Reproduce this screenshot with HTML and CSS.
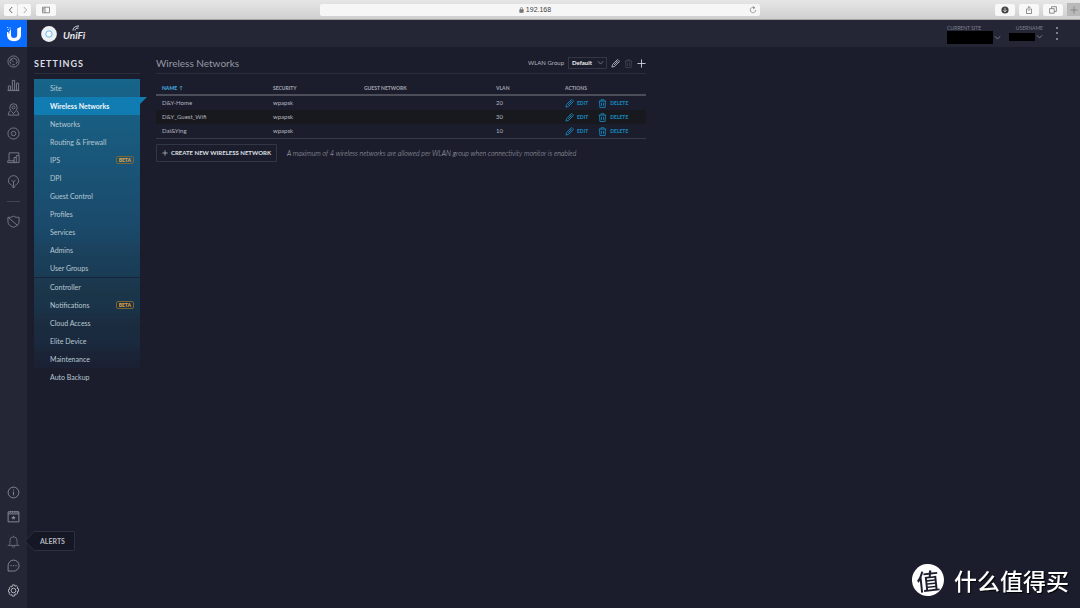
FILE: index.html
```html
<!DOCTYPE html>
<html lang="en">
<head>
<meta charset="utf-8">
<title>UniFi - Wireless Networks</title>
<link rel="stylesheet" href="styles.css">
</head>
<body>
<svg class="defs" aria-hidden="true">
  <symbol id="pencil" viewBox="0 0 12 12"><path d="M1.200 10.800l.9-3.500L8.300 1.100a.9.900 0 0 1 1.300 0l1.300 1.300a.9.900 0 0 1 0 1.300L4.700 9.900zM7.200 2.400l2.400 2.400M4 8l4.300-4.300"/></symbol>
  <symbol id="trash" viewBox="0 0 12 12"><path d="M1 2.800h10M4 2.800V1h4v1.800M2 2.800l.5 8.500h7l.5-8.500M4.600 5v4.200M7.400 5v4.200"/></symbol>
  <symbol id="chevron" viewBox="0 0 8 8"><path d="M1 2.500L4 5.800l3-3.300"/></symbol>
  <symbol id="plus" viewBox="0 0 10 10"><path d="M5 .5v9M.5 5h9"/></symbol>
</svg>
<div class="page">
  <div class="browser">
    <div class="browser-left">
      <div class="history">
        <button class="tool" aria-label="Back"><svg viewBox="0 0 8 8"><path d="M5.200 1L2.400 4l2.800 3"/></svg></button>
        <button class="tool tool-off" aria-label="Forward"><svg viewBox="0 0 8 8"><path d="M2.800 1l2.800 3-2.800 3"/></svg></button>
      </div>
      <button class="tool tool-wide" aria-label="Sidebar"><svg class="icon-8" viewBox="0 0 8 8"><path d="M.5 1.200h7v5.600h-7zM3 1.200v5.600M1.200 2.500h1M1.200 3.700h1M1.200 4.900h1"/></svg></button>
    </div>
    <div class="address">
      <span class="host"><svg class="lock" viewBox="0 0 6 8"><path class="solid" d="M.7 3.500h4.600v3.700H.7z"/><path d="M1.600 3.500V2a1.400 1.400 0 0 1 2.800 0v1.500"/></svg>192.168</span>
      <button class="reload" aria-label="Reload"><svg class="icon-8" viewBox="0 0 8 8"><path d="M6 2.200A2.700 2.700 0 1 0 6.700 4M4 .4l1.700 1.200L4 2.800"/></svg></button>
    </div>
    <div class="browser-right">
      <button class="tool tool-wide" aria-label="Downloads"><svg class="icon-8" viewBox="0 0 8 8"><circle class="dark" cx="4" cy="4" r="3.600"/><path class="light" d="M4 1.800v4M2.400 4.200L4 5.800l1.600-1.600"/></svg></button>
      <button class="tool tool-wide" aria-label="Share"><svg class="icon-8" viewBox="0 0 8 8"><path d="M2.800 3H1.500v4.500h5V3H5.200M4 5V.6M2.700 1.800L4 .5l1.300 1.300"/></svg></button>
      <button class="tool tool-wide" aria-label="Tabs"><svg class="icon-8" viewBox="0 0 8 8"><path d="M.6 2.600h4.600v4.600H.6zM2.600 2.600V.7h4.800v4.700H5.200"/></svg></button>
      <button class="new-tab" aria-label="New tab"><svg class="icon-8" viewBox="0 0 10 10"><use href="#plus"/></svg></button>
    </div>
  </div>

  <div class="app">
    <nav class="rail" aria-label="Main">
      <a class="brand" href="#" aria-label="Ubiquiti"><svg viewBox="0 0 16 16"><path d="M5 3.500V9c0 1.900 1.100 3 3 3 2.200 0 3.200-1.200 3.200-3V2.500L15 .8V9c0 3.800-2.800 6.200-7 6.200S1 12.800 1 9V6h1.400v1.500h1V5h.8V3.500z"/><path d="M1.200 1h1v1h-1zM3.600 1.500h1v1h-1zM1.800 3.300h1v1h-1z"/></svg></a>
      <div class="rail-group">
        <a href="#" aria-label="Dashboard"><svg viewBox="0 0 14 14"><circle cx="7" cy="7" r="6"/><path d="M4 9.500A3.800 3.800 0 1 1 10 9.500M4 4.500l3 3M5.500 10.500h3"/></svg></a>
        <a href="#" aria-label="Statistics"><svg viewBox="0 0 14 14"><path d="M1.500 7.500h2.300V12H1.500zM5.800 1.500h2.400V12H5.800zM10.200 4.500h2.300V12h-2.300zM.5 12.500h13"/></svg></a>
        <a href="#" aria-label="Map"><svg viewBox="0 0 14 14"><path d="M7 11.500C4.500 8.500 3 7 3 4.800a4 4 0 0 1 8 0C11 7 9.500 8.500 7 11.500z"/><circle cx="7" cy="4.800" r="1.600"/><path d="M3.500 9H2.500l-1.300 4h11.600l-1.300-4h-1"/></svg></a>
        <a href="#" aria-label="Devices"><svg viewBox="0 0 14 14"><circle cx="7" cy="7" r="6"/><circle cx="7" cy="7" r="2.400"/></svg></a>
        <a href="#" aria-label="Clients"><svg viewBox="0 0 14 14"><path d="M2.200 10V2h10.600v3M.8 12.500h6.700V10.500H.8zM7.500 12.500V7H10v5.500zM10 7V5h3v7.500h-3"/></svg></a>
        <a href="#" aria-label="Insights"><svg viewBox="0 0 14 14"><path d="M5 10.800C3 10 1.500 8.300 1.500 6.200a5.500 5.500 0 0 1 11 0c0 2.100-1.500 3.800-3.500 4.600M5 12h4M5.800 13.500h2.400M7 12V7.500M4.800 5.300L7 7.500l2.200-2.200"/></svg></a>
      </div>
      <hr class="rail-line">
      <div class="rail-group">
        <a href="#" aria-label="Security"><svg viewBox="0 0 14 14"><path d="M1 2.500c2.200.2 4.200-.2 6-1.200 1.800 1 3.800 1.400 6 1.200V7c0 3-2.300 5.200-6 6.200C3.300 12.200 1 10 1 7zM1.400 2.700l9.800 8.500"/></svg></a>
      </div>
      <div class="rail-bottom">
        <a href="#" aria-label="Info"><svg viewBox="0 0 14 14"><circle cx="7" cy="7" r="5.800"/><path d="M7 6v4M7 3.800v1"/></svg></a>
        <a href="#" aria-label="Events"><svg viewBox="0 0 14 14"><path d="M1.200 2h11.600v10.800H1.200zM1.200 4.200h11.600M3.500 1v2M6 1v2M8.500 1v2M11 1v2"/><path class="fill" d="M7 6l.7 1.600 1.600.1-1.200 1.100.4 1.600L7 9.500l-1.500.9.400-1.600-1.200-1.100 1.600-.1z"/></svg></a>
        <a class="alerts" href="#" aria-label="Alerts"><svg viewBox="0 0 14 14"><path d="M.8 11.200h12.400M2.600 11.200C3.300 10 3.200 8.500 3.200 5.800a3.800 3.800 0 0 1 7.600 0c0 2.700-.1 4.200.6 5.400M5.500 12c.2 1.600 2.800 1.600 3 0M7 2V.8"/></svg>
          <span class="tip"><svg class="tip-arrow" viewBox="0 0 10 20"><path d="M10 .5L1 10l9 9.500"/></svg><span class="tip-text">ALERTS</span></span></a>
        <a href="#" aria-label="Chat"><svg viewBox="0 0 14 14"><path d="M1.200 13V7A5.900 5.900 0 1 1 7 13z"/><path d="M3.600 7.200H5M6.300 7.200h1.400M9 7.200h1.400"/></svg></a>
        <a class="current" href="#" aria-label="Settings"><svg viewBox="0 0 14 14"><path d="M5.800 1h2.400l.4 1.500 1.300-.8 1.700 1.600-.7 1.400 1.500.4v2.800l-1.500.4.700 1.400-1.700 1.700-1.300-.8L8.200 13H5.800l-.4-1.600-1.300.8-1.700-1.700.7-1.400-1.500-.4V5.900l1.500-.4-.7-1.400 1.700-1.600 1.300.8z"/><circle cx="7" cy="7" r="2.500"/></svg></a>
      </div>
    </nav>

    <div class="body">
      <header class="top">
        <a class="product" href="#">
          <svg class="disc" viewBox="0 0 16 16"><circle class="disc-face" cx="8" cy="8" r="7.900"/><circle class="disc-ring" cx="8" cy="8" r="3.200"/></svg>
          <span class="word">UniFi<svg class="waves" viewBox="0 0 8 6"><path d="M1 5.500C1 3 3 1 7 1M3 5.500C3 4 4 3 6.500 3"/></svg></span>
        </a>
        <div class="account">
          <button class="pick"><span class="pick-label">CURRENT SITE</span><span class="pick-row"><span class="mask"></span><svg viewBox="0 0 8 8"><use href="#chevron"/></svg></span></button>
          <button class="pick pick-user"><span class="pick-label">USERNAME</span><span class="pick-row"><span class="mask mask-small"></span><svg viewBox="0 0 8 8"><use href="#chevron"/></svg></span></button>
          <button class="more" aria-label="More"><i></i><i></i><i></i></button>
        </div>
      </header>

      <div class="columns">
        <aside class="settings">
          <h1>SETTINGS</h1>
          <ul class="menu">
            <li><a href="#">Site</a></li>
            <li><a class="active" href="#">Wireless Networks</a></li>
            <li><a href="#">Networks</a></li>
            <li><a href="#">Routing &amp; Firewall</a></li>
            <li><a href="#">IPS<span class="beta">BETA</span></a></li>
            <li><a href="#">DPI</a></li>
            <li><a href="#">Guest Control</a></li>
            <li><a href="#">Profiles</a></li>
            <li><a href="#">Services</a></li>
            <li><a href="#">Admins</a></li>
            <li><a href="#">User Groups</a></li>
            <li class="split"><a href="#">Controller</a></li>
            <li><a href="#">Notifications<span class="beta">BETA</span></a></li>
            <li><a href="#">Cloud Access</a></li>
            <li><a href="#">Elite Device</a></li>
            <li><a href="#">Maintenance</a></li>
          </ul>
          <ul class="menu menu-plain"><li><a href="#">Auto Backup</a></li></ul>
        </aside>

        <main class="content">
          <div class="heading">
            <h2>Wireless Networks</h2>
            <div class="group">
              <label for="wlan">WLAN Group</label>
              <span class="select"><select id="wlan"><option>Default</option></select><svg viewBox="0 0 8 8"><use href="#chevron"/></svg></span>
              <button class="icon-button" aria-label="Edit group"><svg viewBox="0 0 12 12"><use href="#pencil"/></svg></button>
              <button class="icon-button dim" aria-label="Delete group"><svg viewBox="0 0 12 12"><use href="#trash"/></svg></button>
              <button class="icon-button" aria-label="Add group"><svg viewBox="0 0 10 10"><use href="#plus"/></svg></button>
            </div>
          </div>
          <table>
            <colgroup><col class="c-name"><col class="c-security"><col class="c-guest"><col class="c-vlan"><col class="c-actions"></colgroup>
            <thead><tr><th class="sorted">NAME&nbsp; <svg class="sort" viewBox="0 0 6 8"><path d="M3 7.500V1M1 3l2-2 2 2"/></svg></th><th>SECURITY</th><th>GUEST NETWORK</th><th>VLAN</th><th>ACTIONS</th></tr></thead>
            <tbody>
              <tr><td>D&amp;Y-Home</td><td>wpapsk</td><td></td><td>20</td><td><div class="actions"><button><svg viewBox="0 0 12 12"><use href="#pencil"/></svg>EDIT</button><button><svg viewBox="0 0 12 12"><use href="#trash"/></svg>DELETE</button></div></td></tr>
              <tr><td>D&amp;Y_Guest_Wifi</td><td>wpapsk</td><td></td><td>30</td><td><div class="actions"><button><svg viewBox="0 0 12 12"><use href="#pencil"/></svg>EDIT</button><button><svg viewBox="0 0 12 12"><use href="#trash"/></svg>DELETE</button></div></td></tr>
              <tr><td>Dai&amp;Ying</td><td>wpapsk</td><td></td><td>10</td><td><div class="actions"><button><svg viewBox="0 0 12 12"><use href="#pencil"/></svg>EDIT</button><button><svg viewBox="0 0 12 12"><use href="#trash"/></svg>DELETE</button></div></td></tr>
            </tbody>
          </table>
          <div class="footer">
            <button class="create"><svg viewBox="0 0 10 10"><use href="#plus"/></svg>CREATE NEW WIRELESS NETWORK</button>
            <em>A maximum of 4 wireless networks are allowed per WLAN group when connectivity monitor is enabled</em>
          </div>
        </main>
      </div>
    </div>
  </div>
  <div class="watermark"><span class="seal">值</span><span>什么值得买</span></div>
</div>
</body>
</html>
```
FILE: styles.css
```css
* { box-sizing: border-box; }
body { margin: 0; background: #1b1d2d; color: #b4b6be; font: 7px/10px Lato, "Noto Sans CJK SC", sans-serif; }
button, select { font: inherit; color: inherit; background: none; border: 0; margin: 0; padding: 0; }
a { color: inherit; text-decoration: none; }
ul { list-style: none; margin: 0; padding: 0; }
svg { display: block; fill: none; stroke: currentColor; stroke-width: 1; }
.defs { position: absolute; width: 0; height: 0; }
.page { display: flex; flex-direction: column; min-height: 100vh; }

/* Browser toolbar */
.browser { display: grid; grid-template-columns: 1fr 440px 1fr; align-items: center; height: 20px; background: linear-gradient(#e6e6e6, #cfcfcf); border-bottom: 1px solid #a5a5a5; color: #666; }
.browser-left { display: flex; gap: 5px; padding-left: 4px; }
.history { display: flex; gap: 1px; }
.browser-right { display: flex; justify-content: flex-end; align-items: center; gap: 4px; }
.tool { display: flex; align-items: center; justify-content: center; width: 13px; height: 12px; border-radius: 2px; background: #f8f8f8; }
.tool svg { width: 8px; height: 8px; }
.tool-wide { width: 20px; }
.tool-off { color: #aaa; }
.icon-8 { width: 8px; height: 8px; stroke-width: .7; }
.dark { fill: #444; stroke: none; }
.light { stroke: #fff; }
.new-tab { display: flex; align-items: center; justify-content: center; align-self: flex-end; width: 13px; height: 13px; background: #b9b9b9; }
.address { display: grid; grid-template-columns: 1fr auto 1fr; align-items: center; height: 12px; border-radius: 2px; background: #f6f6f6; font-family: "Liberation Sans", sans-serif; color: #444; }
.host { grid-column: 2; display: flex; align-items: center; gap: 2px; padding-right: 10px; }
.lock { width: 5px; height: 6px; color: #777; }
.solid { fill: currentColor; }
.reload { justify-self: end; padding-right: 3px; color: #777; }

/* Icon rail */
.app { display: flex; flex: 1; }
.rail { display: flex; flex-direction: column; flex: none; width: 27px; background: #242636; color: #7a7c87; }
.brand { display: flex; align-items: center; justify-content: center; height: 27px; margin-bottom: 2px; background: #0a6cff; color: #fff; }
.brand svg { width: 16px; height: 16px; fill: currentColor; stroke: none; }
.rail-group { display: flex; flex-direction: column; }
.rail-group a, .rail-bottom a { display: flex; align-items: center; justify-content: center; height: 24px; }
.rail-group a > svg, .rail-bottom a > svg { width: 13px; height: 13px; }
.rail-line { width: 13px; margin: 8px auto 7px; border: 0; border-top: 1px solid #434553; }
.rail-bottom { display: flex; flex-direction: column; justify-content: space-between; height: 122px; margin-top: auto; margin-bottom: 6px; color: #8b8d97; }
.fill { fill: currentColor; stroke: none; }
.alerts { position: relative; color: #6c6e7a; }
.current { color: #b8bac2; }
.tip { position: absolute; left: 24px; top: 2px; display: flex; height: 20px; color: #b4b6be; }
.rail-bottom .tip-arrow { width: 10px; height: 20px; fill: #151724; stroke: #2d303f; }
.tip-text { display: flex; align-items: center; padding: 0 9px 0 6px; background: #151724; border: 1px solid #2d303f; border-left: 0; border-radius: 0 2px 2px 0; font-weight: 700; }

/* Header */
.body { flex: 1; min-width: 0; }
.top { display: flex; align-items: center; justify-content: space-between; height: 27px; padding: 0 22px 0 14px; background: #242636; }
.product { display: flex; align-items: center; gap: 6px; color: #e4e5e9; }
.disc { width: 16px; height: 16px; stroke: none; }
.disc-face { fill: #eef1f4; }
.disc-ring { fill: #f8fafc; stroke: #68b9ec; }
.word { position: relative; padding-top: 2px; font-size: 10px; line-height: 12px; font-style: italic; font-weight: 700; }
.waves { position: absolute; left: 9px; top: -2px; width: 8px; height: 6px; }
.account { display: flex; align-items: flex-start; height: 16px; color: #7f818c; }
.pick { display: flex; flex-direction: column; align-items: flex-start; margin-right: 8px; text-align: left; }
.pick-user { align-items: flex-end; margin-right: 13px; }
.pick-label { font-size: 5px; line-height: 5px; }
.pick-row { display: flex; align-items: center; gap: 1px; }
.pick-row svg { width: 7px; height: 7px; }
.mask { width: 46px; height: 13px; background: #000; }
.mask-small { width: 26px; height: 8px; margin: 2px 0; }
.more { display: flex; flex-direction: column; justify-content: space-between; height: 13px; margin-top: 1px; }
.more i { width: 2px; height: 2px; border-radius: 50%; background: #9b9da6; }

/* Settings menu */
.columns { display: flex; align-items: flex-start; gap: 16px; padding: 10px 7px; }
.settings { flex: none; width: 106px; }
h1 { margin: 0 0 5px; padding-bottom: 3px; border-bottom: 1px solid #2a2d3b; color: #dcdde1; font-size: 9px; line-height: 13px; font-weight: 700; letter-spacing: 1px; }
.menu { background: linear-gradient(#17658a, #1b4a6b 50%, #1b3448 75%, #1b2033); color: #b9c8d2; }
.menu li:nth-child(odd) { background: rgba(20, 110, 150, .04); }
.menu a { position: relative; display: flex; align-items: center; justify-content: space-between; height: 18px; padding: 0 6px 0 16px; }
.menu .active { background: #117cb2; color: #f0f7fb; font-weight: 700; }
.active::after { content: ""; position: absolute; left: 100%; top: 0; border-top: 7px solid #117cb2; border-right: 7px solid transparent; }
.menu .split { border-top: 1px solid #182439; }
.menu-plain, .menu-plain li:nth-child(odd) { background: none; }
.beta { padding: 0 2px; border: 1px solid #7a6434; border-radius: 2px; color: #e3a33b; font-size: 5px; line-height: 6px; font-weight: 900; }

/* Networks table */
.content { flex: 1; max-width: 490px; }
.heading { display: flex; align-items: flex-start; justify-content: space-between; height: 17px; border-bottom: 1px solid #2a2d3b; }
h2 { margin: 0; color: #9698a2; font-size: 10px; line-height: 13px; font-weight: 400; }
.group { display: flex; align-items: center; gap: 4px; }
.group label { font-size: 6px; color: #b4b6be; }
.select { position: relative; display: flex; }
.select select { appearance: none; width: 39px; height: 12px; padding: 0 3px; border: 1px solid #333644; background: #1b1d2d; color: #f0f1f3; font-size: 6px; font-weight: 700; }
.select svg { position: absolute; right: 3px; top: 2px; width: 7px; height: 7px; color: #777985; pointer-events: none; }
.icon-button { color: #d0d2d8; }
.icon-button svg { width: 9px; height: 9px; }
.dim { color: #454855; }
table { width: 100%; margin-top: 8px; border-collapse: separate; border-spacing: 0; border-bottom: 1px solid #373a47; table-layout: fixed; font-size: 6px; }
.c-name { width: 111px; }
.c-security { width: 91px; }
.c-guest { width: 132px; }
.c-vlan { width: 69px; }
th, td { height: 14px; padding: 0 0 0 6px; text-align: left; line-height: 10px; }
th { border-bottom: 2px solid #4b4e59; color: #9a9ca6; font-size: 5px; font-weight: 900; }
.sorted { color: #45a9df; }
.sort { display: inline-block; width: 4px; height: 6px; vertical-align: -1px; }
tbody tr:nth-child(even) { background: #18191e; }
.actions { display: flex; gap: 10px; }
.actions button { display: flex; align-items: center; gap: 3px; color: #1785b8; font-size: 5px; font-weight: 900; }
.actions svg { width: 9px; height: 9px; stroke-width: 1.2; }
.footer { display: flex; align-items: center; gap: 10px; margin-top: 5px; }
.create { display: flex; align-items: center; gap: 3px; height: 18px; padding: 0 5px; border: 1px solid #333644; border-radius: 1px; color: #dfe0e4; font-size: 6px; font-weight: 700; }
.create svg { width: 6px; height: 6px; }
.footer em { font-weight: 300; color: #b4b6be; white-space: nowrap; }

/* Watermark */
.watermark { position: fixed; right: 11px; bottom: 12px; display: flex; align-items: center; gap: 10px; color: #fff; font: 500 23px/32px "Noto Sans CJK SC", sans-serif; text-shadow: 1px 1px 1px #000; }
.seal { display: flex; align-items: center; justify-content: center; width: 32px; height: 32px; border-radius: 50%; background: #fff; color: #1b1d2d; text-shadow: none; transform: rotate(-6deg); }
```
